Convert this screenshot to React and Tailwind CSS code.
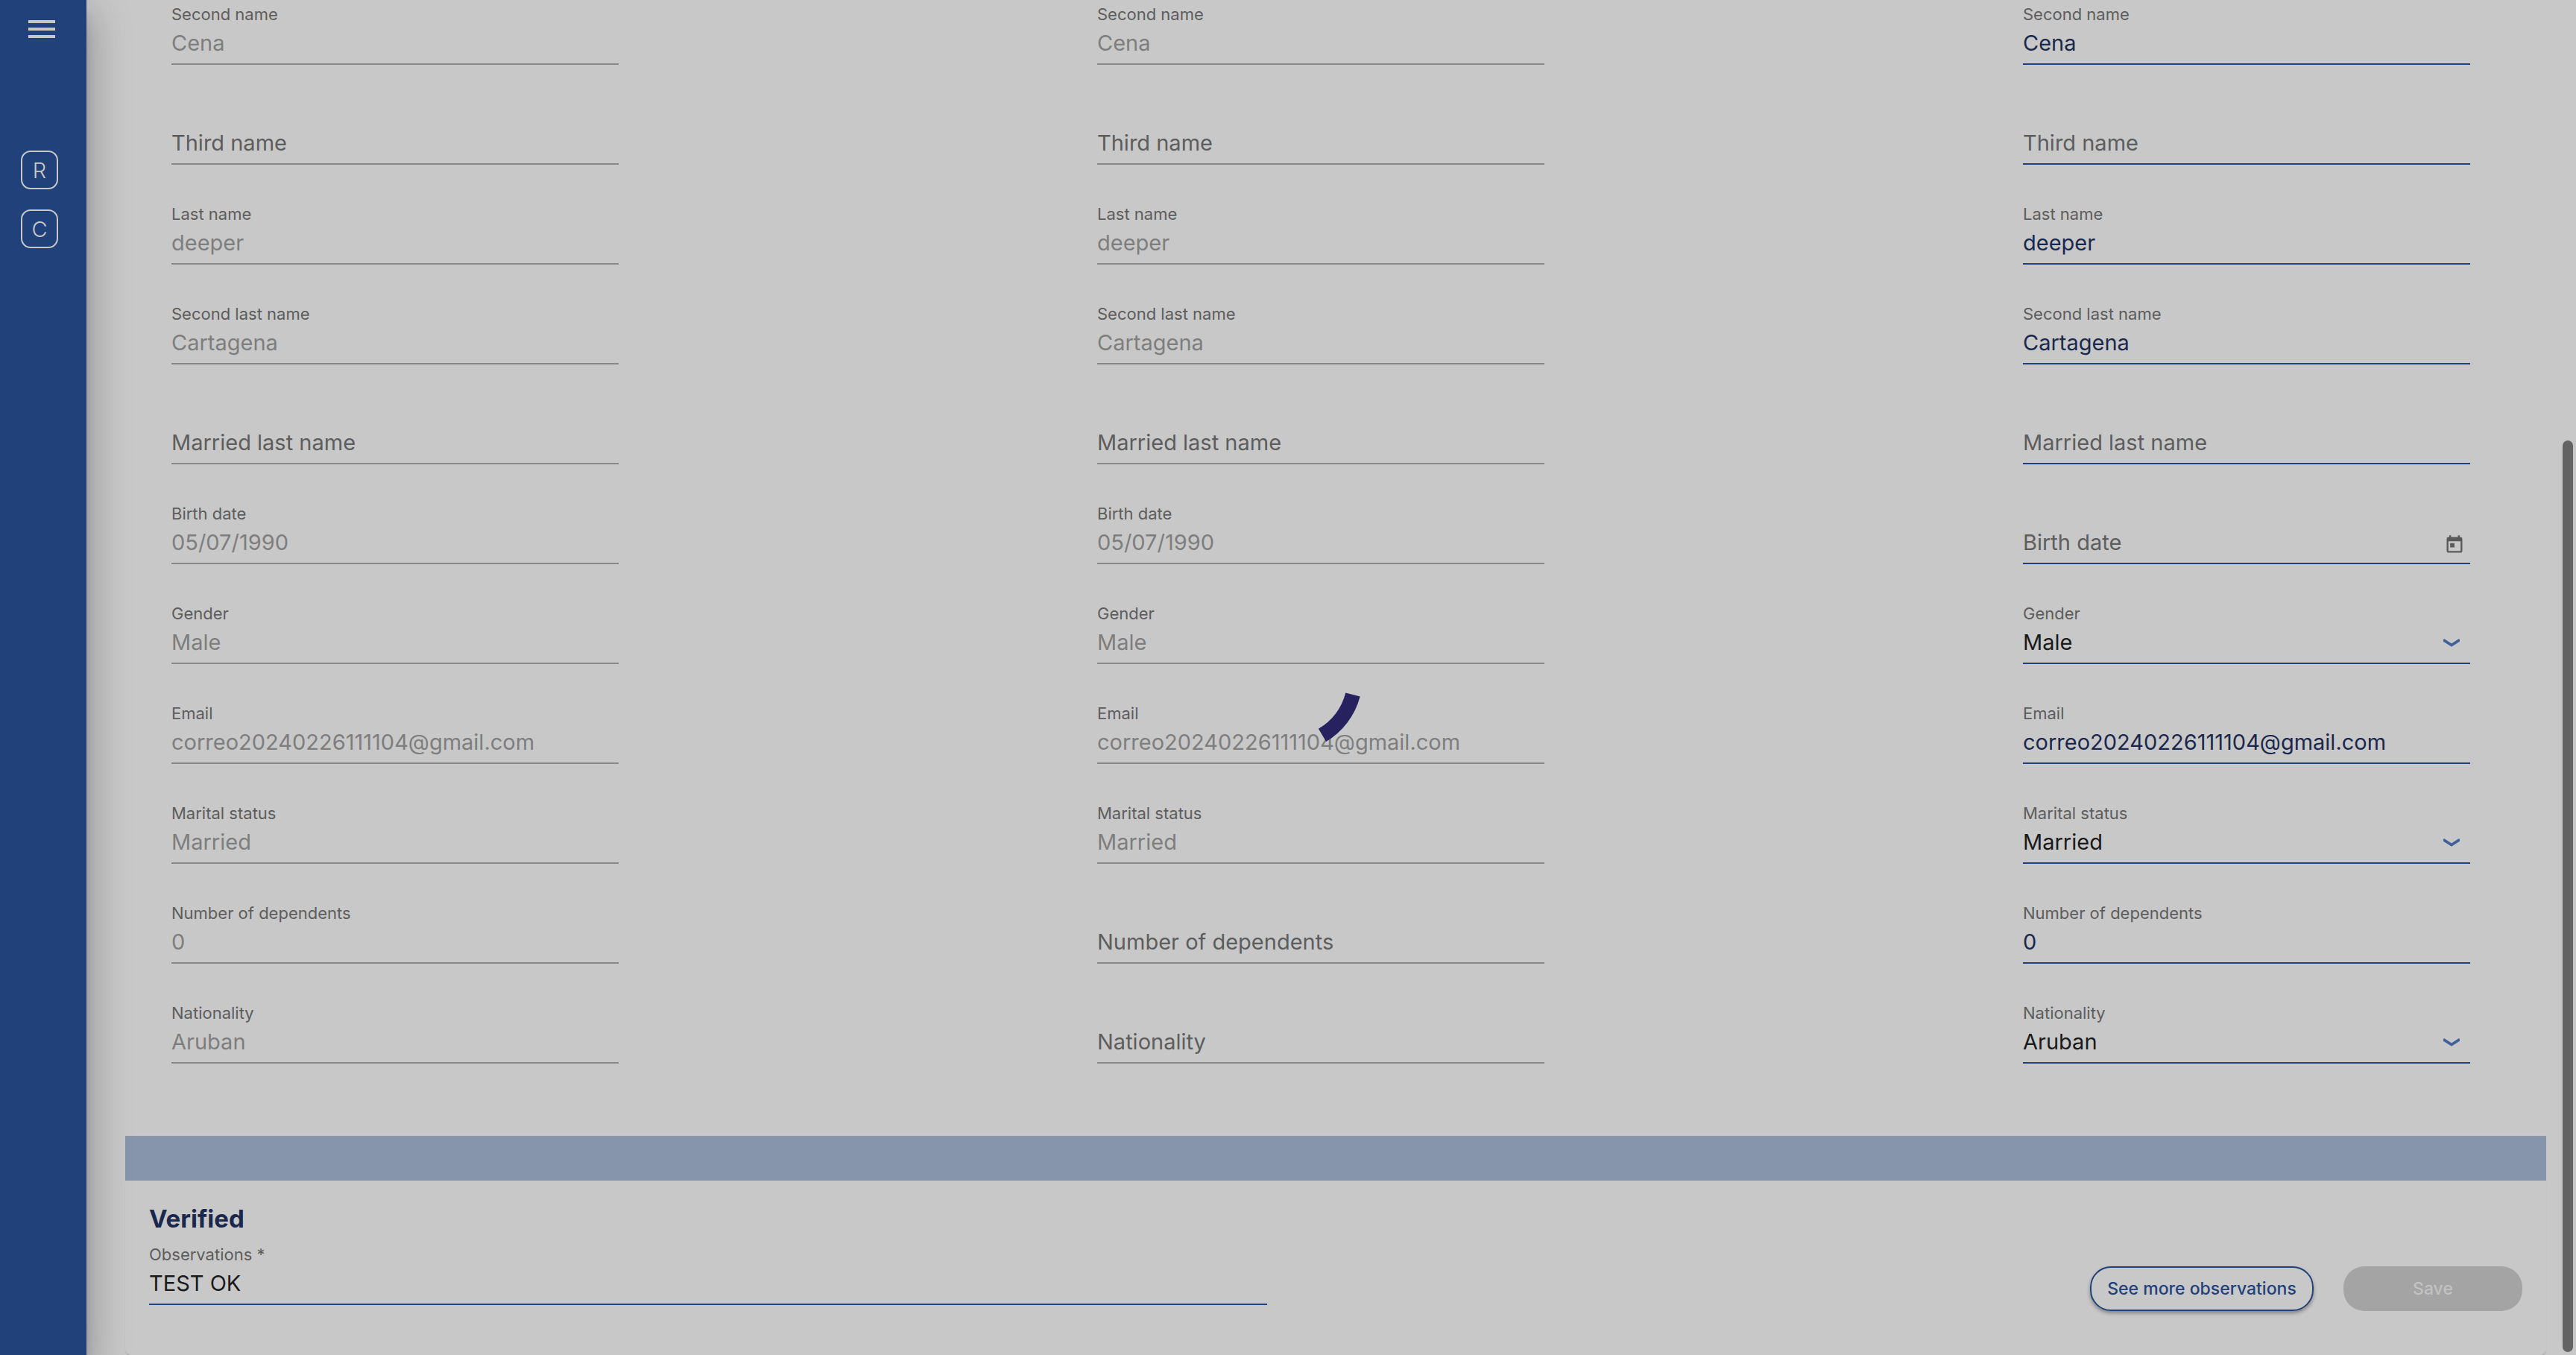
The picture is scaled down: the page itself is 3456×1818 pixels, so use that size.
import React, { useId } from "react";
import { MdMenu, MdToday } from "react-icons/md";

const declared = [
  { label: "Second name", value: "Cena" },
  { label: "Third name" },
  { label: "Last name", value: "deeper" },
  { label: "Second last name", value: "Cartagena" },
  { label: "Married last name" },
  { label: "Birth date", value: "05/07/1990" },
  { label: "Gender", value: "Male" },
  { label: "Email", value: "correo20240226111104@gmail.com" },
  { label: "Marital status", value: "Married" },
  { label: "Number of dependents", value: "0" },
  { label: "Nationality", value: "Aruban" },
];

const registered = [
  ...declared.slice(0, 9),
  { label: "Number of dependents" },
  { label: "Nationality" },
];

const verified = [
  { label: "Second name", value: "Cena" },
  { label: "Third name" },
  { label: "Last name", value: "deeper" },
  { label: "Second last name", value: "Cartagena" },
  { label: "Married last name" },
  { label: "Birth date", kind: "date" },
  { label: "Gender", value: "Male", kind: "select" },
  { label: "Email", value: "correo20240226111104@gmail.com" },
  { label: "Marital status", value: "Married", kind: "select" },
  { label: "Number of dependents", value: "0" },
  { label: "Nationality", value: "Aruban", kind: "select" },
];

function Chevron() {
  return (
    <svg viewBox="0 0 22 12" className="h-3 w-[22px]" fill="none" aria-hidden="true">
      <path d="M0 1.5 L11 8.5 L22 1.5" stroke="#3f609a" strokeWidth="3.6" />
    </svg>
  );
}

function Field({ label, value, kind, disabled, plain }) {
  const id = useId();
  const tone = disabled
    ? "border-[#888888] text-[#7e7e7e]"
    : plain
      ? "border-[#21417a] text-[#1a1a1a]"
      : "border-[#21417a] text-[#1b284d]";
  const control =
    "block h-[53px] w-full appearance-none rounded-none border-b-2 bg-transparent pb-1 text-[29px] outline-none";

  return (
    <div className="relative flex h-[87px] flex-col justify-end">
      {value ? (
        <label htmlFor={id} className="text-[22px] leading-[30px] text-[#5d5d5d]">
          {label}
        </label>
      ) : (
        <label
          htmlFor={id}
          className="pointer-events-none absolute inset-x-0 bottom-1.5 text-[29px] leading-[47px] text-[#5d5d5d]"
        >
          {label}
        </label>
      )}
      {kind === "select" ? (
        <select
          id={id}
          defaultValue={value}
          className="block h-[53px] w-full appearance-none rounded-none border-b-2 border-[#21417a] bg-transparent pb-1 text-[29px] text-[#1a1a1a] outline-none"
        >
          <option>{value}</option>
        </select>
      ) : (
        <input id={id} type="text" defaultValue={value} disabled={disabled} className={`${control} ${tone}`} />
      )}
      {kind === "select" && (
        <span className="pointer-events-none absolute right-3.5 bottom-[22px] flex">
          <Chevron />
        </span>
      )}
      {kind === "date" && (
        <button type="button" aria-label="Open calendar" className="absolute right-[7px] bottom-3 text-[#5a5a5a]">
          <MdToday size={28} />
        </button>
      )}
    </div>
  );
}

function Column({ fields, disabled }) {
  return (
    <div className="flex w-full max-w-[600px] flex-col gap-[47px]">
      {fields.map((field) => (
        <Field key={field.label} {...field} disabled={disabled} />
      ))}
    </div>
  );
}

function Sidebar() {
  return (
    <nav className="relative z-10 flex w-[116px] shrink-0 flex-col bg-[#21417a] text-[#c8c8c8] shadow-[0_32px_48px_4px_rgba(0,0,0,0.16),0_12px_60px_10px_rgba(0,0,0,0.12),0_16px_14px_-4px_rgba(0,0,0,0.2)]">
      <button type="button" aria-label="Menu" className="mt-[15px] ml-8 w-12">
        <MdMenu size={48} />
      </button>
      <div className="mt-[139px] ml-7 flex flex-col gap-[27px]">
        {["R", "C"].map((letter) => (
          <a
            key={letter}
            href="#"
            className="flex h-[52px] w-[50px] items-center justify-center rounded-[13px] border-2 border-[#c8c8c8] text-[29px] leading-none font-light"
          >
            {letter}
          </a>
        ))}
      </div>
    </nav>
  );
}

function Spinner() {
  return (
    <div role="status" aria-label="Loading" className="pointer-events-none fixed inset-0 z-20 flex items-center justify-center">
      <svg viewBox="-100 -100 200 200" className="size-[200px]" fill="none" aria-hidden="true">
        <path d="M87 23 A90 90 0 0 1 46 77.4" stroke="#27225f" strokeWidth="20" />
      </svg>
    </div>
  );
}

export default function App() {
  return (
    <div className="flex min-h-screen bg-[#c8c8c8] font-['Inter','Liberation_Sans',sans-serif]">
      <Sidebar />
      <main className="flex min-w-0 flex-1 flex-col pr-10 pl-[52px]">
        <section className="flex justify-between gap-10 pr-[102px] pb-[97px] pl-[62px]">
          <Column fields={declared} disabled />
          <Column fields={registered} disabled />
          <Column fields={verified} />
        </section>
        <div className="h-[60px] bg-[#8695ac]" />
        <section className="flex flex-1 items-end justify-between gap-10 rounded-b-lg bg-[#c8c8c8] px-8 pt-[31px] pb-[59px] shadow-[0_2px_2px_-1px_rgba(0,0,0,0.3)]">
          <div className="mb-2 w-full max-w-[1500px]">
            <h2 className="mb-[9px] text-[33px] leading-10 font-bold text-[#1b284d]">Verified</h2>
            <Field label="Observations *" value="TEST OK" plain />
          </div>
          <div className="flex gap-10">
            <button
              type="button"
              className="h-[60px] w-[300px] rounded-[28px] border-2 border-[#21417a] text-[23px] font-medium whitespace-nowrap text-[#21417a] shadow-[0_3px_5px_rgba(0,0,0,0.35)]"
            >
              See more observations
            </button>
            <button
              type="button"
              disabled
              className="h-[60px] w-[240px] rounded-[28px] bg-[#a4a4a4] text-[23px] font-medium text-[#c2c2c2]"
            >
              Save
            </button>
          </div>
        </section>
      </main>
      <div className="fixed top-[591px] right-1 bottom-1 z-10 w-3.5 rounded-full bg-[#636363]" />
      <Spinner />
    </div>
  );
}
